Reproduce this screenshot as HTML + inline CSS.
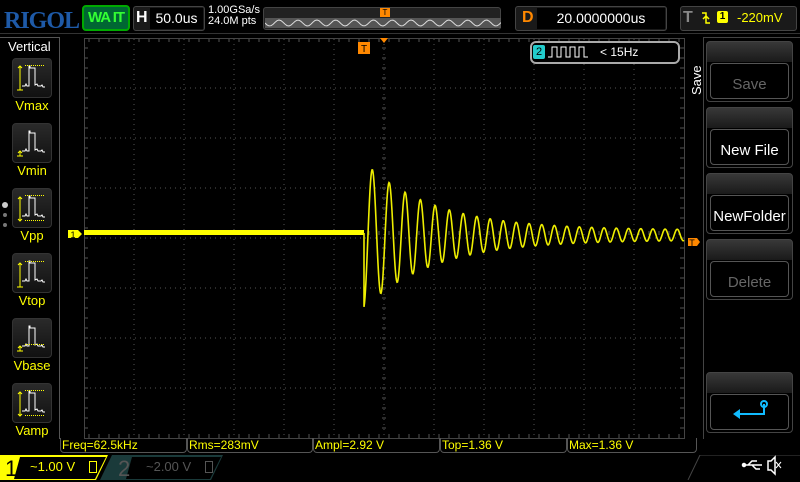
<!DOCTYPE html>
<html><head><meta charset="utf-8">
<style>
*{margin:0;padding:0;box-sizing:border-box}
body{width:800px;height:480px;background:#000;overflow:hidden;position:relative;font-family:"Liberation Sans",sans-serif;color:#fff}
.a{position:absolute}
.btn{position:absolute;left:12px;width:40px;height:40px;border:1px solid #333;border-radius:4px;background:linear-gradient(#2a2a2a,#111)}
.lbl{position:absolute;left:0;width:64px;text-align:center;color:#ff0;font-size:13px}
.rb{position:absolute;left:706px;width:87px;height:61px;border:1px solid #444;border-radius:4px;background:linear-gradient(#383838 0,#1a1a1a 20px,#000 20px)}
.rb .in{position:absolute;left:3px;right:3px;top:21px;bottom:2px;border:1px solid #555;border-radius:4px;background:#000;display:flex;align-items:center;justify-content:center;font-size:15px;padding-top:6px}
.m{position:absolute;top:438px;height:15px;border:1px solid #555;border-top:none;border-radius:0 0 4px 4px;color:#ff0;font-size:12px;line-height:14px;padding-left:1px;font-family:"Liberation Sans Narrow","Liberation Sans",sans-serif}
</style></head><body>
<div class="a" style="left:4px;top:8px;font-family:'Liberation Serif',serif;font-weight:bold;font-size:24px;color:#1e5aa8;letter-spacing:-1px">RIGOL</div>
<div class="a" style="left:82px;top:5px;width:48px;height:26px;border:2px solid #0a0;border-radius:4px;background:#063;color:#3f3;font-weight:bold;font-size:15px;text-align:center;line-height:22px;letter-spacing:-1px">WA IT</div>
<div class="a" style="left:133px;top:6px;width:72px;height:25px;border:1px solid #444;border-radius:3px;background:#1a1a1a"></div>
<div class="a" style="left:136px;top:9px;font-weight:bold;font-size:16px">H</div>
<div class="a" style="left:150px;top:8px;width:53px;height:21px;background:#000;font-size:14px;text-align:center;line-height:21px">50.0us</div>
<div class="a" style="left:208px;top:5px;font-size:11px;line-height:11px">1.00GSa/s<br>24.0M pts</div>
<div class="a" style="left:263px;top:7px;width:238px;height:23px;border:1px solid #444;border-radius:3px;background:#222"></div>
<svg class="a" style="left:265px;top:18px" width="236" height="10"><rect width="236" height="10" fill="#555"/><path id="mw" fill="none" stroke="#ddd" stroke-width="1"/></svg>
<div class="a" style="left:380px;top:8px;width:10px;height:9px;background:#f80;color:#000;font-size:8px;text-align:center;line-height:9px">T</div>
<div class="a" style="left:515px;top:6px;width:152px;height:25px;border:1px solid #444;border-radius:3px;background:#1a1a1a"></div>
<div class="a" style="left:522px;top:9px;font-weight:bold;font-size:16px;color:#f80">D</div>
<div class="a" style="left:537px;top:8px;width:128px;height:21px;background:#000;font-size:14px;text-align:center;line-height:21px">20.0000000us</div>
<div class="a" style="left:680px;top:6px;width:117px;height:25px;border:1px solid #444;border-radius:3px;background:#1a1a1a"></div>
<div class="a" style="left:683px;top:9px;font-weight:bold;font-size:16px;color:#888">T</div>
<svg class="a" style="left:700px;top:10px" width="12" height="16"><path d="M2 3h4v10h4M6 6l-3 3M6 6l3 3" stroke="#ff0" stroke-width="1.5" fill="none"/></svg>
<div class="a" style="left:717px;top:11px;width:11px;height:12px;background:#ff0;border-radius:2px;color:#000;font-size:10px;text-align:center;line-height:12px;font-weight:bold">1</div>
<div class="a" style="left:737px;top:10px;font-size:13px;color:#ff0">-220mV</div>
<div class="a" style="left:0;top:33px;width:800px;height:1px;background:#333"></div>

<div class="a" style="left:0;top:37px;width:60px;height:402px;border-right:1px solid #555;border-top:1px solid #555"></div>
<div class="a" style="left:8px;top:39px;font-size:13px">Vertical</div>
<div class="btn" style="top:58px"></div><div class="lbl" style="top:98px">Vmax</div>
<div class="btn" style="top:123px"></div><div class="lbl" style="top:163px">Vmin</div>
<div class="btn" style="top:188px"></div><div class="lbl" style="top:228px">Vpp</div>
<div class="btn" style="top:253px"></div><div class="lbl" style="top:293px">Vtop</div>
<div class="btn" style="top:318px"></div><div class="lbl" style="top:358px">Vbase</div>
<div class="btn" style="top:383px"></div><div class="lbl" style="top:423px">Vamp</div>
<svg class="a" style="left:12px;top:58px" width="40" height="370" fill="none" stroke-width="1">
<g id="ic"><path d="M10 28h3l1-2 1 2h2v-20h1v2h5v17l2-1 1 2h3l1-1 1 2h2" stroke="#fff"/></g>
<use href="#ic" y="65"/><use href="#ic" y="130"/><use href="#ic" y="195"/><use href="#ic" y="260"/><use href="#ic" y="325"/>
<g stroke="#ff0"><path d="M8 8v24M6 10l2-2 2 2M5 32h6"/><path d="M13 7.5h19" stroke-dasharray="1 1"/>
<path d="M8 93v5M5 98h6M6 95l2-2 2 2"/>
<path d="M8 139v24M6 141l2-2 2 2M6 161l2 2 2-2"/><path d="M13 137.5h19M13 162.5h19" stroke-dasharray="1 1"/>
<path d="M8 205v24M6 207l2-2 2 2M5 229h6"/><path d="M13 203.5h19" stroke-dasharray="1 1"/>
<path d="M8 288v5M5 293h6M6 290l2-2 2 2"/><path d="M13 286.5h19" stroke-dasharray="1 1"/>
<path d="M8 334v24M6 336l2-2 2 2M6 356l2 2 2-2"/><path d="M13 332.5h19M13 357.5h19" stroke-dasharray="1 1"/></g>
</svg>
<div class="a" style="left:2px;top:202px;width:6px;height:6px;border-radius:3px;background:#ccc"></div>
<div class="a" style="left:3px;top:213px;width:4px;height:4px;border-radius:2px;background:#777"></div>
<div class="a" style="left:3px;top:223px;width:4px;height:4px;border-radius:2px;background:#777"></div>

<svg class="a" style="left:0;top:0" width="800" height="480">
<g id="grid" stroke="#555" stroke-width="1" stroke-dasharray="1 4"></g>
<path id="ticks" stroke="#555" stroke-width="1"/>
<rect x="84.5" y="38.5" width="600" height="400" fill="none" stroke="#444"/>
<rect x="84" y="230" width="280" height="5" fill="#ff0"/>
<polyline id="wv" fill="none" stroke="#ee0" stroke-width="1.6"/>
<path d="M380 38h8l-4 5z" fill="#f80"/>
<rect x="358" y="42" width="12" height="12" fill="#f80"/><text x="364" y="52" fill="#000" font-size="10" text-anchor="middle" font-family="Liberation Sans">T</text>
<path d="M688 238h9l3 4-3 4h-9z" fill="#f80"/><text x="692" y="246" fill="#000" font-size="9" text-anchor="middle" font-family="Liberation Sans">T</text>
<path d="M68 230h10l4 4-4 4h-10z" fill="#ff0"/><text x="73" y="238" fill="#000" font-size="9" text-anchor="middle" font-family="Liberation Sans">1</text>
</svg>
<div class="a" style="left:530px;top:41px;width:150px;height:23px;border:2px solid #aaa;border-radius:6px;background:#000"></div>
<div class="a" style="left:533px;top:45px;width:12px;height:14px;background:#2cc;border-radius:2px;color:#000;font-size:11px;text-align:center;line-height:14px">2</div>
<svg class="a" style="left:548px;top:45px" width="46" height="14"><path d="M0 12h4V2h5v10h4V2h5v10h4V2h5v10h4V2h5v10h4" fill="none" stroke="#fff"/></svg>
<div class="a" style="left:600px;top:45px;font-size:12px">&lt; 15Hz</div>

<div class="a" style="left:703px;top:37px;width:97px;height:402px;border-left:1px solid #444;border-top:1px solid #444"></div>
<div class="a" style="left:689px;top:95px;transform:rotate(-90deg);transform-origin:0 0;font-size:13px">Save</div>
<div class="rb" style="top:41px"><div class="in" style="color:#666">Save</div></div>
<div class="rb" style="top:107px"><div class="in">New File</div></div>
<div class="rb" style="top:173px"><div class="in">NewFolder</div></div>
<div class="rb" style="top:239px"><div class="in" style="color:#666">Delete</div></div>
<div class="rb" style="top:372px"><div class="in"></div></div>
<svg class="a" style="left:730px;top:399px" width="40" height="30"><path d="M34 5v10H8" stroke="#1bf" stroke-width="2" fill="none"/><path d="M3 15l7-5v10z" fill="#1bf"/><circle cx="34" cy="5" r="3" fill="none" stroke="#1bf" stroke-width="2"/></svg>

<div class="m" style="left:60px;width:127px">Freq=62.5kHz</div>
<div class="m" style="left:187px;width:126px">Rms=283mV</div>
<div class="m" style="left:313px;width:127px">Ampl=2.92 V</div>
<div class="m" style="left:440px;width:127px">Top=1.36 V</div>
<div class="m" style="left:567px;width:130px">Max=1.36 V</div>

<svg class="a" style="left:0;top:455px" width="800" height="25">
<path d="M0 0h108l-12 25H0z" fill="#ff0"/>
<path d="M20 2h86l-11 22H14z" fill="#000"/>
<path d="M112 0h111l-12 25H100z" fill="#1a3a3a"/>
<path d="M132 2h89l-11 22H126z" fill="#000"/>
<path d="M700 0h100" stroke="#444"/><path d="M700 0l-12 25" stroke="#444"/>
<g stroke="#fff" fill="none" stroke-width="1.5"><path d="M744 10h18M748 10l4-4h5M752 10l4 4h4"/><circle cx="744" cy="10" r="1.5" fill="#fff"/>
<path d="M768 6h3l4-4v17l-4-4h-3z"/><path d="M776 7l5 6M781 7l-5 6" stroke-width="1"/></g>
</svg>
<div class="a" style="left:5px;top:456px;font-size:22px;color:#000">1</div>
<div class="a" style="left:30px;top:459px;font-size:13px;color:#ff0">~1.00 V</div>
<div class="a" style="left:89px;top:461px;width:8px;height:12px;border:1px solid #ff0"></div>
<div class="a" style="left:118px;top:456px;font-size:22px;color:#555">2</div>
<div class="a" style="left:146px;top:459px;font-size:13px;color:#555">~2.00 V</div>
<div class="a" style="left:205px;top:461px;width:8px;height:12px;border:1px solid #555"></div>

<script>
var g=document.getElementById('grid'),s='';
for(var x=134;x<684;x+=50)s+='<line x1="'+x+'" y1="39" x2="'+x+'" y2="438"/>';
for(var y=88;y<438;y+=50)s+='<line x1="85" y1="'+y+'" x2="684" y2="'+y+'"/>';
g.innerHTML=s;
var t='';
for(var x=89;x<684;x+=10)t+='M'+x+' 38v4M'+x+' 434v4M'+x+' 231v4';
for(var y=48;y<438;y+=10)t+='M84 '+y+'h4M680 '+y+'h4M382 '+y+'h4';
document.getElementById('ticks').setAttribute('d',t);
var p='364,233 ',ph=0;
for(var x=364;x<=684;x+=0.5){var u=x-364;var f=1/(12+6*Math.exp(-u/80));ph+=2*Math.PI*f*0.5;var A=68*Math.exp(-u/70)+5;p+=x+','+(235+A*Math.cos(ph)).toFixed(1)+' ';}
document.getElementById('wv').setAttribute('points',p);
var m='M0 5';for(var x=0;x<=236;x+=2)m+='L'+x+' '+(5+3*Math.sin(x/3)).toFixed(1);
document.getElementById('mw').setAttribute('d',m);
</script>
</body></html>
